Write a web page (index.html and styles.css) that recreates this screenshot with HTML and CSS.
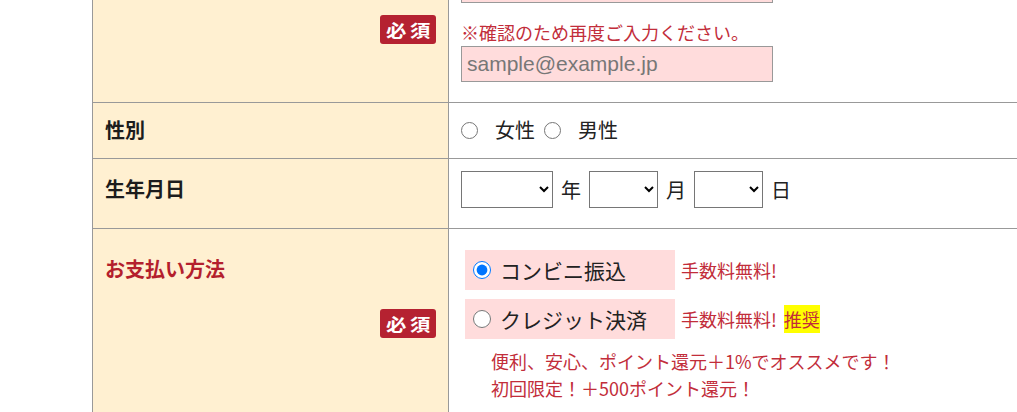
FILE: index.html
```html
<!DOCTYPE html>
<html lang="ja">
<head>
<meta charset="utf-8">
<title>お申し込みフォーム</title>
<link rel="stylesheet" href="styles.css">
</head>
<body>
<div class="page">
  <table class="form">
    <colgroup><col class="col-h"><col class="col-d"></colgroup>
    <tbody>
      <tr class="row-email">
        <th>
          <div class="req req-top"><span class="badge"><span class="badge-txt">必須</span></span></div>
        </th>
        <td>
          <input class="text" type="email" placeholder="sample@example.jp">
          <p class="note">※確認のため再度ご入力ください。</p>
          <input class="text" type="email" placeholder="sample@example.jp">
        </td>
      </tr>
      <tr class="row-gender">
        <th><div class="label">性別</div></th>
        <td>
          <div class="radios">
            <label class="radio"><input type="radio" name="sex"><span>女性</span></label>
            <label class="radio"><input type="radio" name="sex"><span>男性</span></label>
          </div>
        </td>
      </tr>
      <tr class="row-birth">
        <th><div class="label">生年月日</div></th>
        <td>
          <div class="date">
            <select class="sel sel-y"><option></option></select><span>年</span>
            <select class="sel sel-m"><option></option></select><span>月</span>
            <select class="sel sel-d"><option></option></select><span>日</span>
          </div>
        </td>
      </tr>
      <tr class="row-pay">
        <th>
          <div class="label label-red">お支払い方法</div>
          <div class="req"><span class="badge"><span class="badge-txt">必須</span></span></div>
        </th>
        <td>
          <div class="pay-line">
            <label class="pay-opt"><input type="radio" name="pay" checked><span>コンビニ振込</span></label>
            <span class="free">手数料無料!</span>
          </div>
          <div class="pay-line">
            <label class="pay-opt"><input type="radio" name="pay"><span>クレジット決済</span></label>
            <span class="free">手数料無料!</span><span class="rec">推奨</span>
          </div>
          <p class="promo">便利、安心、ポイント還元＋1%でオススメです！<br>初回限定！＋500ポイント還元！</p>
        </td>
      </tr>
    </tbody>
  </table>
</div>
</body>
</html>
```
FILE: styles.css
```css
html {
  overflow: hidden;
}
body {
  margin: 0;
  background: #ffffff;
  font-family: "Noto Sans CJK JP", "Noto Sans", sans-serif;
  color: #222222;
}
.page {
  padding-left: 92px;
  margin-top: -54px;
}
.form {
  border-collapse: collapse;
  table-layout: fixed;
  width: 1100px;
}
.col-h {
  width: 356px;
}
.form th,
.form td {
  border: 1px solid #999999;
  text-align: left;
  vertical-align: top;
}
.form th {
  background: #fff0d1;
  padding: 12px 12px 13px;
  font-size: 20px;
  line-height: 30px;
  font-weight: bold;
  color: #1c1c1c;
}
.form td {
  padding: 12px 12px 13px;
  font-size: 20px;
  line-height: 30px;
  color: #222222;
}
.label-red {
  color: #b41f2d;
}
.req {
  display: flex;
  justify-content: flex-end;
  margin-top: 25px;
}
.req-top {
  margin-top: 0;
}
.badge {
  display: inline-flex;
  align-items: center;
  justify-content: center;
  width: 56px;
  height: 29px;
  background: #b52231;
  border-radius: 3px;
  color: #ffffff;
  font-size: 17px;
  line-height: 1;
  font-weight: bold;
}
.badge-txt {
  display: inline-block;
  letter-spacing: 3px;
  transform: scaleX(1.2);
  margin-right: -3px;
}

/* email row */
.row-email th {
  padding-top: 68px;
}
.row-email td {
  padding-top: 20px;
  padding-bottom: 20px;
}
.text {
  display: block;
  box-sizing: border-box;
  width: 312px;
  height: 36px;
  margin: 0;
  padding: 0 5px;
  border: 1px solid #999999;
  background: #ffdcdc;
  font-family: "Liberation Sans", Arial, sans-serif;
  font-size: 21px;
  color: #333333;
}
.text::placeholder {
  color: #777777;
}
.note {
  margin: 16px 0 1px;
  font-size: 18px;
  line-height: 26px;
  color: #c22d3a;
}

/* gender */
.radios {
  display: flex;
  align-items: center;
  height: 30px;
}
.radio {
  display: flex;
  align-items: center;
  margin-right: 9px;
}
.radio input {
  width: 17px;
  height: 17px;
  margin: 0 17px 0 0;
}

/* birth */
.row-birth th {
  padding-top: 15px;
}
.row-birth td {
  padding-bottom: 20px;
}
.date {
  display: flex;
  align-items: center;
  gap: 8px;
}
.sel {
  box-sizing: border-box;
  height: 37px;
  margin: 0;
  font-size: 18px;
  background: #ffffff;
}
.sel-y {
  width: 92px;
}
.sel-m,
.sel-d {
  width: 69px;
}

/* payment */
.row-pay th {
  padding-top: 25px;
  padding-bottom: 80px;
}
.row-pay td {
  padding-top: 21px;
  padding-bottom: 40px;
}
.pay-line {
  display: flex;
  align-items: center;
  margin-left: 4px;
  margin-bottom: 9px;
}
.pay-opt {
  display: flex;
  align-items: center;
  box-sizing: border-box;
  width: 210px;
  height: 40px;
  padding-left: 8px;
  background: #ffdcdc;
  font-size: 21px;
  color: #222222;
}
.pay-opt input {
  width: 18px;
  height: 18px;
  margin: 0 9px 0 0;
}
.free {
  margin-left: 6px;
  font-size: 18px;
  color: #c22d3a;
}
.rec {
  margin-left: 7px;
  background: #ffff00;
  font-size: 18px;
  line-height: 28px;
  color: #c22d3a;
}
.promo {
  margin: 6px 0 0 30px;
  font-size: 18px;
  line-height: 27px;
  color: #c22d3a;
}
```
